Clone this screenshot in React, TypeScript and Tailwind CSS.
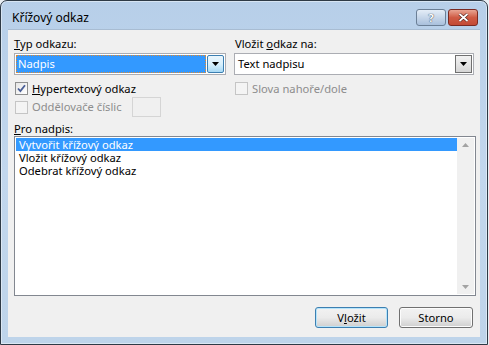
import React from "react";

const font = { fontFamily: '"Segoe UI", "Noto Sans", "Open Sans", sans-serif' };

function ArrowDown({ className = "" }: { className?: string }) {
  return (
    <svg width="7" height="4" viewBox="0 0 7 4" className={className}>
      <path d="M0 0h7L3.5 4z" fill="#000" />
    </svg>
  );
}

function Check() {
  return (
    <svg width="9" height="9" viewBox="0 0 9 9">
      <path d="M1 4.5l2.4 2.6L8 1.2" stroke="#4a5f97" strokeWidth="1.8" fill="none" />
    </svg>
  );
}

function CheckBox({ checked, disabled }: { checked?: boolean; disabled?: boolean }) {
  return (
    <span
      className={
        "w-[13px] h-[13px] shrink-0 flex items-center justify-center border bg-gradient-to-br " +
        (disabled
          ? "border-[#c5c5c5] from-[#f4f4f4] to-[#f4f4f4]"
          : "border-[#8e8f8f] from-[#e6e6e6] to-[#ffffff]")
      }
    >
      {checked && <Check />}
    </span>
  );
}

export default function App() {
  return (
    <div className="w-[489px] h-[345px] bg-[#e9eef3] text-[11.2px] text-black leading-[14px]" style={font}>
      <div className="w-[488px] h-[345px] rounded-t-[7px] border border-[#2e3a46] bg-gradient-to-b from-[#b7cfe9] via-[#c2d7ed] to-[#bed4ea] shadow-[inset_0_0_0_1px_rgba(255,255,255,0.45)] flex flex-col">
        {/* Title bar */}
        <div className="h-[28px] flex items-start justify-between pl-[11px] pr-[9px]">
          <span className="mt-[10px] text-[12px] text-black">Křížový odkaz</span>
          <div className="flex gap-[2px] mt-[8px]">
            <div className="w-[30px] h-[17px] rounded-[3px] border border-[#6b7f96] bg-gradient-to-b from-[#e4edf7] via-[#c6d6e9] to-[#a9c0dc] flex items-center justify-center text-[11px] font-bold text-white [text-shadow:0_0_1px_#3a4a5c,0_0_1px_#3a4a5c]">
              ?
            </div>
            <div className="w-[30px] h-[17px] rounded-[3px] border border-[#7a2a22] bg-gradient-to-b from-[#e8a493] via-[#cf5b44] to-[#c34a35] flex items-center justify-center">
              <svg width="11" height="9" viewBox="0 0 11 9">
                <path d="M1.5 1l8 7M9.5 1l-8 7" stroke="#4a1a14" strokeWidth="3" />
                <path d="M1.5 1l8 7M9.5 1l-8 7" stroke="#fff" strokeWidth="1.8" />
              </svg>
            </div>
          </div>
        </div>

        {/* Client area */}
        <div className="mx-[7px] mb-[7px] flex-1 bg-[#f0f0f0] border-t border-[#a8bcd2] px-[6px] pt-[6px] flex flex-col">
          <div className="grid grid-cols-[212px_240px] gap-x-[8px]">
            <div className="flex flex-col">
              <span className="h-[16px] leading-[16px]">
                <u>T</u>yp odkazu:
              </span>
              <div className="mt-[1px] h-[22px] border border-[#abadb3] bg-white flex items-stretch p-[1px]">
                <div className="flex-1 bg-[#3399ff] text-white flex items-center pl-[2px] outline-1 outline-dotted outline-[#e08a30] -outline-offset-1">
                  Nadpis
                </div>
                <div className="w-[17px] ml-[1px] border border-[#3c7fb1] rounded-[2px] bg-gradient-to-b from-[#eaf6fd] via-[#d9f0fc] to-[#a7d9f5] flex items-center justify-center">
                  <ArrowDown />
                </div>
              </div>
              <div className="mt-[6px] flex items-center gap-[4px] h-[15px] pl-[1px]">
                <CheckBox checked />
                <span>
                  <u>H</u>ypertextový odkaz
                </span>
              </div>
              <div className="mt-[1px] flex items-center gap-[4px] h-[20px] pl-[1px] text-[#8d8d8d]">
                <CheckBox disabled />
                <span>Oddělovače číslic</span>
                <div className="ml-[6px] w-[29px] h-[20px] border border-[#d5d5d5] bg-[#f0f0f0]" />
              </div>
            </div>
            <div className="flex flex-col">
              <span className="h-[16px] leading-[16px] pl-[1px]">
                Vložit <u>o</u>dkaz na:
              </span>
              <div className="mt-[1px] h-[22px] border border-[#abadb3] bg-white flex items-stretch">
                <div className="flex-1 flex items-center pl-[3px]">Text nadpisu</div>
                <div className="w-[17px] my-[1px] mr-[1px] border border-[#707070] bg-gradient-to-b from-[#f2f2f2] via-[#e5e5e5] to-[#d5d5d5] flex items-center justify-center">
                  <ArrowDown />
                </div>
              </div>
              <div className="mt-[6px] flex items-center gap-[4px] h-[15px] pl-[1px] text-[#8d8d8d]">
                <CheckBox disabled />
                <span>Slova nahoře/dole</span>
              </div>
            </div>
          </div>

          <span className="mt-[5px] h-[14px] leading-[14px]">
            <u>P</u>ro nadpis:
          </span>
          <div className="w-[462px] h-[160px] border border-[#828790] bg-white flex p-[1px]">
            <div className="flex-1 flex flex-col">
              <div className="h-[13px] bg-[#3399ff] text-white leading-[13px] pl-[3px]">Vytvořit křížový odkaz</div>
              <div className="h-[13px] leading-[13px] pl-[3px]">Vložit křížový odkaz</div>
              <div className="h-[13px] leading-[13px] pl-[3px]">Odebrat křížový odkaz</div>
            </div>
            <div className="w-[17px] bg-[#f0f0f0] flex flex-col justify-between items-center py-[5px]">
              <svg width="7" height="4" viewBox="0 0 7 4">
                <path d="M0 4h7L3.5 0z" fill="#a3a3a3" />
              </svg>
              <svg width="7" height="4" viewBox="0 0 7 4">
                <path d="M0 0h7L3.5 4z" fill="#a3a3a3" />
              </svg>
            </div>
          </div>

          <div className="mt-[11px] flex justify-end gap-[11px] pr-[1px]">
            <button className="w-[73px] h-[21px] rounded-[3px] border border-[#3c7fb1] bg-gradient-to-b from-[#f2f2f2] via-[#ebebeb] to-[#cfcfcf] shadow-[inset_0_0_0_1px_#b5e4fb] flex items-center justify-center">
              <span>
                V<u>l</u>ožit
              </span>
            </button>
            <button className="w-[74px] h-[21px] rounded-[3px] border border-[#707070] bg-gradient-to-b from-[#f2f2f2] via-[#ebebeb] to-[#cfcfcf] shadow-[inset_0_0_0_1px_#fcfcfc] flex items-center justify-center">
              Storno
            </button>
          </div>
        </div>
      </div>
    </div>
  );
}
